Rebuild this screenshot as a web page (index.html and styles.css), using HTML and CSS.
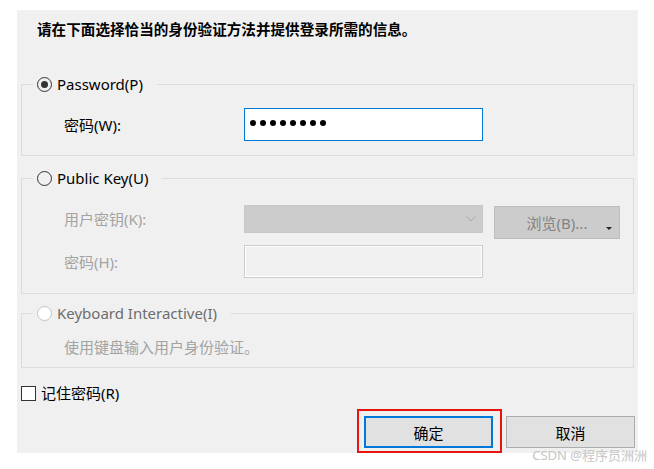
FILE: index.html
```html
<!DOCTYPE html>
<html lang="zh-CN">
<head>
<meta charset="utf-8">
<title>身份验证</title>
<link rel="stylesheet" href="styles.css">
</head>
<body>
<div class="dialog">
  <div class="panel">
    <p class="title">请在下面选择恰当的身份验证方法并提供登录所需的信息。</p>

    <fieldset class="group g1">
      <legend><span class="radio checked"></span>Password(P)</legend>
      <div class="row">
        <label class="lbl">密码(W):</label>
        <div class="input focus"><i></i><i></i><i></i><i></i><i></i><i></i><i></i><i></i></div>
      </div>
    </fieldset>

    <fieldset class="group g2">
      <legend><span class="radio"></span>Public Key(U)</legend>
      <div class="row top">
        <label class="lbl dis">用户密钥(K):</label>
        <div class="combo">
          <svg width="10" height="6" viewBox="0 0 10 6"><polyline points="0.5,0.5 5,5 9.5,0.5" fill="none" stroke="#a9a9a9" stroke-width="1"/></svg>
        </div>
        <div class="browse">浏览(B)...<span class="tri"></span></div>
      </div>
      <div class="row gap">
        <label class="lbl dis">密码(H):</label>
        <div class="input disabled"></div>
      </div>
    </fieldset>

    <fieldset class="group g3">
      <legend class="dis-legend"><span class="radio disabled"></span>Keyboard Interactive(I)</legend>
      <p class="desc">使用键盘输入用户身份验证。</p>
    </fieldset>

    <div class="remember"><span class="checkbox"></span>记住密码(R)</div>

    <div class="buttons">
      <div class="ok-wrap"><div class="btn primary">确定</div></div>
      <div class="btn">取消</div>
    </div>
  </div>
  <div class="watermark">CSDN @程序员洲洲</div>
</div>
</body>
</html>
```

FILE: styles.css
```css
html, body {
  margin: 0;
  background: #ffffff;
}

body {
  font-family: "Noto Sans", "Noto Sans CJK SC", sans-serif;
  font-size: 15px;
  color: #000;
}

.dialog {
  position: relative;
  width: 654px;
  height: 469px;
  padding-top: 10px;
  box-sizing: border-box;
  overflow: hidden;
}

.panel {
  margin-left: 17px;
  width: 621px;
  background: #f0f0f0;
  padding: 9px 0 5px;
}

.title {
  margin: 0 0 34px 20px;
  font-family: "Noto Sans CJK SC", sans-serif;
  font-weight: bold;
  font-size: 14.6px;
  line-height: 20px;
}

.group {
  margin: 0 4px;
  border: 1px solid #dcdcdc;
  padding: 13px 0 14px;
  min-width: 0;
}

.g1 legend {
  margin-top: 1px;
}

.g2 {
  margin-top: 11px;
  padding: 16px 0 15px;
}

.g2 legend {
  margin-top: 2px;
}

.g3 {
  margin-top: 8px;
  padding: 13px 0 10px;
}

.g3 legend {
  margin-top: 1px;
}

.group legend {
  display: flex;
  align-items: center;
  margin-left: 11px;
  padding: 0 14px 0 4px;
  height: 22px;
  line-height: 22px;
  font-size: 15px;
}

.dis-legend {
  color: #6d6d6d;
}

.radio {
  display: inline-grid;
  place-items: center;
  width: 15px;
  height: 15px;
  box-sizing: border-box;
  border: 1px solid #333;
  border-radius: 50%;
  margin-right: 5px;
}

.radio.checked::after {
  content: "";
  width: 7px;
  height: 7px;
  border-radius: 50%;
  background: #333;
}

.radio.disabled {
  border-color: #c4c4c4;
  background: #fff;
}

.row {
  display: flex;
  align-items: center;
  padding-left: 42px;
}

.row.top {
  align-items: flex-start;
}

.row.gap {
  margin-top: 6px;
}

.lbl {
  width: 180px;
  line-height: 28px;
}

.lbl.dis {
  color: #a3a3a3;
}

.input {
  width: 239px;
  height: 33px;
  box-sizing: border-box;
  display: flex;
  align-items: center;
  gap: 4px;
  padding: 0 0 3px 5px;
}

.input.focus {
  background: #fff;
  border: 1px solid #0078d7;
}

.input.focus i {
  width: 6px;
  height: 6px;
  border-radius: 50%;
  background: #000;
}

.input.disabled {
  background: #f0f0f0;
  border: 1px solid #cccccc;
  box-shadow: inset 0 0 0 1px #fff;
}

.combo {
  width: 239px;
  height: 28px;
  box-sizing: border-box;
  background: #cccccc;
  border: 1px solid #c8c8c8;
  display: flex;
  align-items: center;
  justify-content: flex-end;
  padding-right: 6px;
}

.browse {
  position: relative;
  margin: 1px 0 0 11px;
  width: 126px;
  height: 33px;
  box-sizing: border-box;
  background: #cccccc;
  border: 1px solid #bdbdbd;
  color: #838383;
  display: flex;
  align-items: center;
  justify-content: center;
  font-size: 15px;
}

.browse .tri {
  position: absolute;
  right: 7px;
  bottom: 8px;
  width: 0;
  height: 0;
  border-left: 3px solid transparent;
  border-right: 3px solid transparent;
  border-top: 3px solid #222;
}

.desc {
  margin: 0;
  padding-left: 42px;
  line-height: 20px;
  color: #a3a3a3;
}

.remember {
  display: flex;
  align-items: center;
  margin: 14px 0 0 4px;
  line-height: 22px;
}

.checkbox {
  width: 15px;
  height: 15px;
  box-sizing: border-box;
  border: 1px solid #333;
  background: #fff;
  margin-right: 5px;
}

.buttons {
  display: flex;
  justify-content: flex-end;
  gap: 13px;
  margin-top: 12px;
  padding-right: 3px;
}

.ok-wrap {
  position: relative;
}

.ok-wrap::after {
  content: "";
  position: absolute;
  left: -7px;
  top: -7px;
  right: -9px;
  bottom: -5px;
  border: 2px solid #e8150f;
}

.btn {
  width: 129px;
  height: 32px;
  box-sizing: border-box;
  background: #e1e1e1;
  border: 1px solid #adadad;
  display: flex;
  align-items: center;
  justify-content: center;
  font-family: "Noto Sans CJK SC", sans-serif;
  font-size: 15px;
}

.btn.primary {
  border: 2px solid #0078d7;
}

.watermark {
  position: absolute;
  right: 7px;
  top: 445px;
  font-size: 13px;
  line-height: 20px;
  color: #c6c6c6;
  white-space: nowrap;
}
```
